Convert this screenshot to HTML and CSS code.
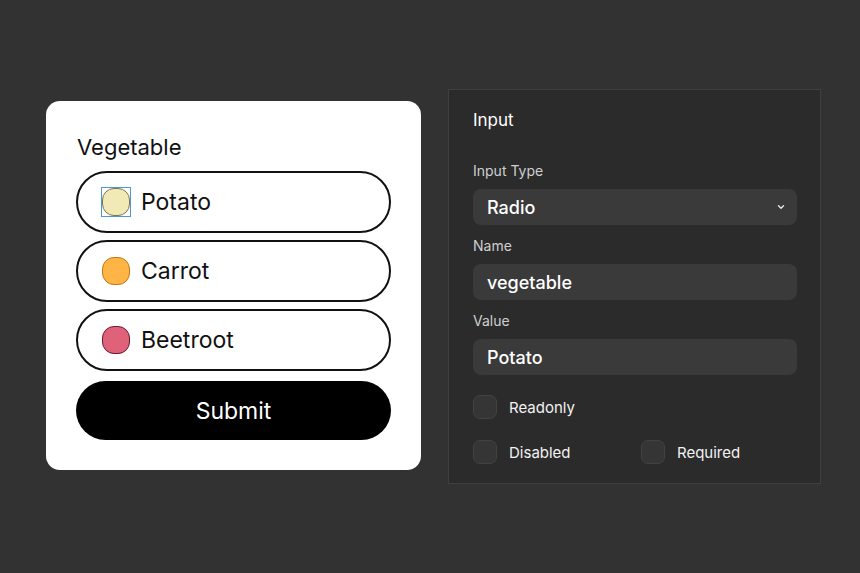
FILE: index.html
```html
<!DOCTYPE html>
<html>
<head>
<meta charset="utf-8">
<link rel="stylesheet" href="styles.css">
</head>
<body>
<div class="stage">
  <form class="card">
    <div class="legend">Vegetable</div>
    <label class="option">
      <span class="radio focus"><span class="dot potato"></span></span>
      <span class="opt-text">Potato</span>
    </label>
    <label class="option">
      <span class="radio"><span class="dot carrot"></span></span>
      <span class="opt-text">Carrot</span>
    </label>
    <label class="option">
      <span class="radio"><span class="dot beet"></span></span>
      <span class="opt-text">Beetroot</span>
    </label>
    <div class="submit">Submit</div>
  </form>

  <section class="panel">
    <h2 class="panel-title">Input</h2>
    <div class="field-label first">Input Type</div>
    <div class="field select">
      <span>Radio</span>
      <svg class="chev" width="8" height="6" viewBox="0 0 8 6"><path d="M1.5 1.8 L4 4.2 L6.5 1.8" fill="none" stroke="#e8e8e8" stroke-width="1.4" stroke-linecap="round" stroke-linejoin="round"/></svg>
    </div>
    <div class="field-label">Name</div>
    <div class="field">vegetable</div>
    <div class="field-label">Value</div>
    <div class="field">Potato</div>
    <div class="checks">
      <div class="check"><span class="box"></span><span>Readonly</span></div>
      <div class="check"></div>
      <div class="check"><span class="box"></span><span>Disabled</span></div>
      <div class="check"><span class="box"></span><span>Required</span></div>
    </div>
  </section>
</div>
</body>
</html>
```
FILE: styles.css
```css
* { box-sizing: border-box; }
html, body { margin: 0; padding: 0; }
body {
  background: #323232;
  font-family: Inter, "Noto Sans", sans-serif;
  width: 860px;
  height: 573px;
  overflow: hidden;
}
.stage {
  display: flex;
  align-items: flex-start;
  gap: 27px;
  padding: 89px 0 0 46px;
}
.card {
  margin-top: 12px;
  width: 375px;
  height: 369px;
  background: #fff;
  border-radius: 14px;
  padding: 33px 30px 30px 30px;
  display: flex;
  flex-direction: column;
  gap: 7px;
}
.legend {
  font-size: 22px;
  line-height: 26px;
  color: #111;
  margin-bottom: 4px;
  padding-left: 1px;
}
.option {
  height: 62px;
  border: 2px solid #111;
  border-radius: 31px;
  display: flex;
  align-items: center;
  padding-left: 23px;
  gap: 10px;
}
.radio {
  width: 30px;
  height: 30px;
  display: flex;
  align-items: center;
  justify-content: center;
  border: 1px solid transparent;
}
.radio.focus { border-color: #4a9ad6; }
.dot {
  width: 28px;
  height: 28px;
  border-radius: 12px;
  border: 1.3px solid;
}
.potato { background: #f1e9b6; border-color: #7d735c; }
.carrot { background: #ffb446; border-color: #c27717; }
.beet { background: #e0617a; border-color: #6e1a2e; }
.opt-text {
  font-size: 23px;
  color: #111;
  line-height: 28px;
}
.submit {
  margin-top: 3px;
  height: 59px;
  border-radius: 30px;
  background: #000;
  color: #fff;
  font-size: 23px;
  display: flex;
  align-items: center;
  justify-content: center;
}
.panel {
  width: 373px;
  height: 395px;
  background: #2b2b2b;
  border: 1px solid #3f3f3f;
  padding: 19px 23px 0 24px;
  color: #fff;
}
.panel-title {
  margin: 0;
  font-size: 17px;
  font-weight: 400;
  line-height: 22px;
}
.field-label {
  font-size: 14px;
  line-height: 18px;
  color: #cfcfcf;
  margin: 12px 0 9px;
}
.field-label.first { margin-top: 31px; }
.field {
  height: 36px;
  border-radius: 8px;
  background: #3a3a3a;
  padding: 0 14px;
  display: flex;
  align-items: center;
  font-size: 18px;
  font-weight: 500;
  color: #fff;
}
.select { justify-content: space-between; }
.chev { margin-right: -2px; }
.checks {
  margin-top: 20px;
  display: grid;
  grid-template-columns: 168px 1fr;
  row-gap: 21px;
}
.check {
  display: flex;
  align-items: center;
  gap: 12px;
  font-size: 15px;
  height: 24px;
  color: #f2f2f2;
}
.box {
  width: 24px;
  height: 24px;
  border-radius: 7px;
  background: #353535;
  border: 1px solid #424242;
}
```
